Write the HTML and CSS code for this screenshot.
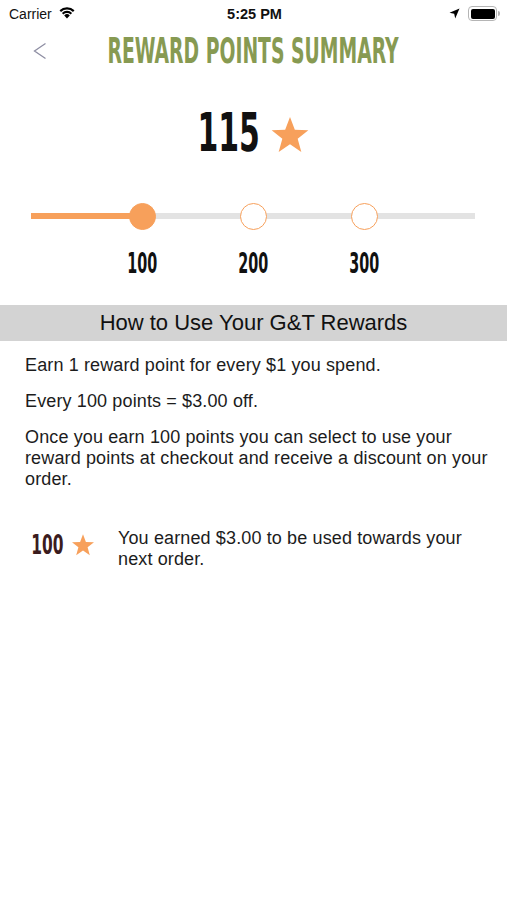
FILE: index.html
```html
<!DOCTYPE html>
<html lang="en">
<head>
    <meta charset="UTF-8">
    <meta name="viewport" content="width=device-width, initial-scale=1.0">
    <title>Reward Points Summary</title>
    <link rel="stylesheet" href="styles.css">
</head>
<body>
    <div class="status-bar">
        <div class="status-left">
            <span class="carrier">Carrier</span>
            <svg class="wifi" width="18" height="13" viewBox="0 0 18 13">
                <path d="M9 12.5 L6.2 9.4 A4 4 0 0 1 11.8 9.4 Z" fill="#000"/>
                <path d="M3.9 6.9 A7.3 7.3 0 0 1 14.1 6.9 L12.6 8.5 A5.2 5.2 0 0 0 5.4 8.5 Z" fill="#000"/>
                <path d="M1.5 4.3 A10.8 10.8 0 0 1 16.5 4.3 L15 5.9 A8.6 8.6 0 0 0 3 5.9 Z" fill="#000"/>
            </svg>
        </div>
        <span class="clock">5:25 PM</span>
        <div class="status-right">
            <svg class="locate" width="11" height="11" viewBox="0 0 11 11">
                <path d="M10.5 0.5 L0.5 4.8 L5.2 5.8 L6.2 10.5 Z" fill="#000"/>
            </svg>
            <div class="battery"><div class="battery-level"></div></div>
            <div class="battery-nub"></div>
        </div>
    </div>

    <header class="nav-bar">
        <svg class="back" width="14" height="18" viewBox="0 0 14 18">
            <path d="M12.5 1.5 L1.5 9 L12.5 16.5" fill="none" stroke="#8e8ea3" stroke-width="1.3"/>
        </svg>
        <h1 class="page-title"><span class="squeeze">Reward Points Summary</span></h1>
    </header>

    <section class="points">
        <span class="points-total squeeze">115</span>
        <svg class="star" width="40" height="40" viewBox="0 0 24 24">
            <path d="M12 1.2 L14.9 8.9 L23 9.2 L16.6 14.2 L18.8 22.2 L12 17.6 L5.2 22.2 L7.4 14.2 L1 9.2 L9.1 8.9 Z" fill="#f7a05b"/>
        </svg>
    </section>

    <section class="progress">
        <div class="track">
            <span class="dot dot-done"></span>
            <span class="dot"></span>
            <span class="dot"></span>
        </div>
        <div class="levels">
            <span class="level"><span class="squeeze">100</span></span>
            <span class="level"><span class="squeeze">200</span></span>
            <span class="level"><span class="squeeze">300</span></span>
        </div>
    </section>

    <h2 class="band">How to Use Your G&amp;T Rewards</h2>

    <div class="info">
        <p>Earn 1 reward point for every $1 you spend.</p>
        <p>Every 100 points = $3.00 off.</p>
        <p>Once you earn 100 points you can select to use your reward points at checkout and receive a discount on your order.</p>
    </div>

    <div class="earned">
        <div class="earned-points">
            <span class="earned-num squeeze">100</span>
            <svg class="star-small" width="24" height="24" viewBox="0 0 24 24">
                <path d="M12 1.2 L14.9 8.9 L23 9.2 L16.6 14.2 L18.8 22.2 L12 17.6 L5.2 22.2 L7.4 14.2 L1 9.2 L9.1 8.9 Z" fill="#f7a05b"/>
            </svg>
        </div>
        <p class="earned-text">You earned $3.00 to be used towards your next order.</p>
    </div>
</body>
</html>
```

FILE: styles.css
```css
body {
    margin: 0;
    padding: 0;
    background: #fff;
    color: #1c1c1c;
    font-family: 'Liberation Sans', Arial, sans-serif;
}
.squeeze {
    display: inline-block;
    font-family: 'DejaVu Sans Condensed', sans-serif;
    font-weight: bold;
}

/* status bar */
.status-bar {
    height: 27px;
    display: flex;
    align-items: center;
    justify-content: space-between;
    padding: 0 7px 0 9px;
}
.status-left {
    width: 120px;
    display: flex;
    align-items: center;
    gap: 6px;
}
.carrier {
    font-size: 14px;
    color: #111;
}
.wifi {
    margin-top: -2px;
}
.clock {
    font-size: 14.5px;
    font-weight: bold;
    color: #111;
}
.status-right {
    width: 120px;
    display: flex;
    align-items: center;
    justify-content: flex-end;
}
.locate {
    margin-right: 8px;
}
.battery {
    width: 24px;
    height: 10px;
    border: 1.5px solid #b5b5b5;
    border-radius: 4px;
    padding: 1.5px;
}
.battery-level {
    height: 100%;
    background: #000;
    border-radius: 2px;
}
.battery-nub {
    width: 2px;
    height: 5px;
    background: #b5b5b5;
    border-radius: 0 2px 2px 0;
    margin-left: 1px;
}

/* nav */
.nav-bar {
    height: 48px;
    display: flex;
    align-items: center;
    padding-left: 33px;
}
.back {
    flex: none;
}
.page-title {
    margin: 0 0 0 -14px;
    flex: 1;
    padding-right: 33px;
    text-align: center;
    font-size: 36px;
    font-weight: normal;
    color: #879a52;
    text-transform: uppercase;
    line-height: 1;
    white-space: nowrap;
}
.page-title .squeeze {
    transform: scaleX(0.58);
    margin: 0 -106px;
}

/* points */
.points {
    display: flex;
    justify-content: center;
    align-items: center;
    gap: 10px;
    margin-top: 33px;
    height: 50px;
}
.points-total {
    font-size: 54px;
    line-height: 1;
    color: #111;
    transform: scaleX(0.615);
    margin: 0 -19px;
}
.star {
    margin-top: 3px;
}

/* progress */
.progress {
    margin: 43px 32px 0 31px;
}
.track {
    display: grid;
    grid-template-columns: 1fr 2fr 2fr 2fr 1fr;
    align-items: center;
    height: 30px;
    background: linear-gradient(to right, #f7a05b 25%, #e3e3e3 25%) center / 100% 6px no-repeat;
}
.dot {
    justify-self: center;
    width: 25px;
    height: 25px;
    border: 1.5px solid #f7a05b;
    border-radius: 50%;
    background: #fff;
}
.dot:first-child {
    grid-column: 2;
}
.dot-done {
    background: #f7a05b;
}
.levels {
    display: grid;
    grid-template-columns: 1fr 2fr 2fr 2fr 1fr;
    margin-top: 19px;
}
.level {
    text-align: center;
    font-size: 28px;
    line-height: 1;
    color: #111;
}
.level .squeeze {
    transform: scaleX(0.57);
}
.level:first-child {
    grid-column: 2;
}

/* how to */
.band {
    margin: 27px 0 0;
    height: 36px;
    line-height: 36px;
    background: #d3d3d3;
    text-align: center;
    font-size: 22px;
    font-weight: normal;
    color: #111;
}
.info {
    padding: 14px 12px 0 25px;
}
.info p {
    margin: 0 0 15px;
    font-size: 18px;
    letter-spacing: 0.13px;
    line-height: 21px;
}

/* earned row */
.earned {
    display: flex;
    align-items: flex-start;
    padding: 23px 25px 0 31px;
}
.earned-points {
    width: 87px;
    flex: none;
    display: flex;
    align-items: center;
    height: 34px;
}
.earned-num {
    font-size: 26px;
    color: #3b1c1e;
    transform: scaleX(0.66);
    margin: 0 -8px;
}
.star-small {
    margin-left: 7px;
}
.earned-text {
    margin: 0;
    font-size: 18px;
    letter-spacing: 0.13px;
    line-height: 21px;
}
```
